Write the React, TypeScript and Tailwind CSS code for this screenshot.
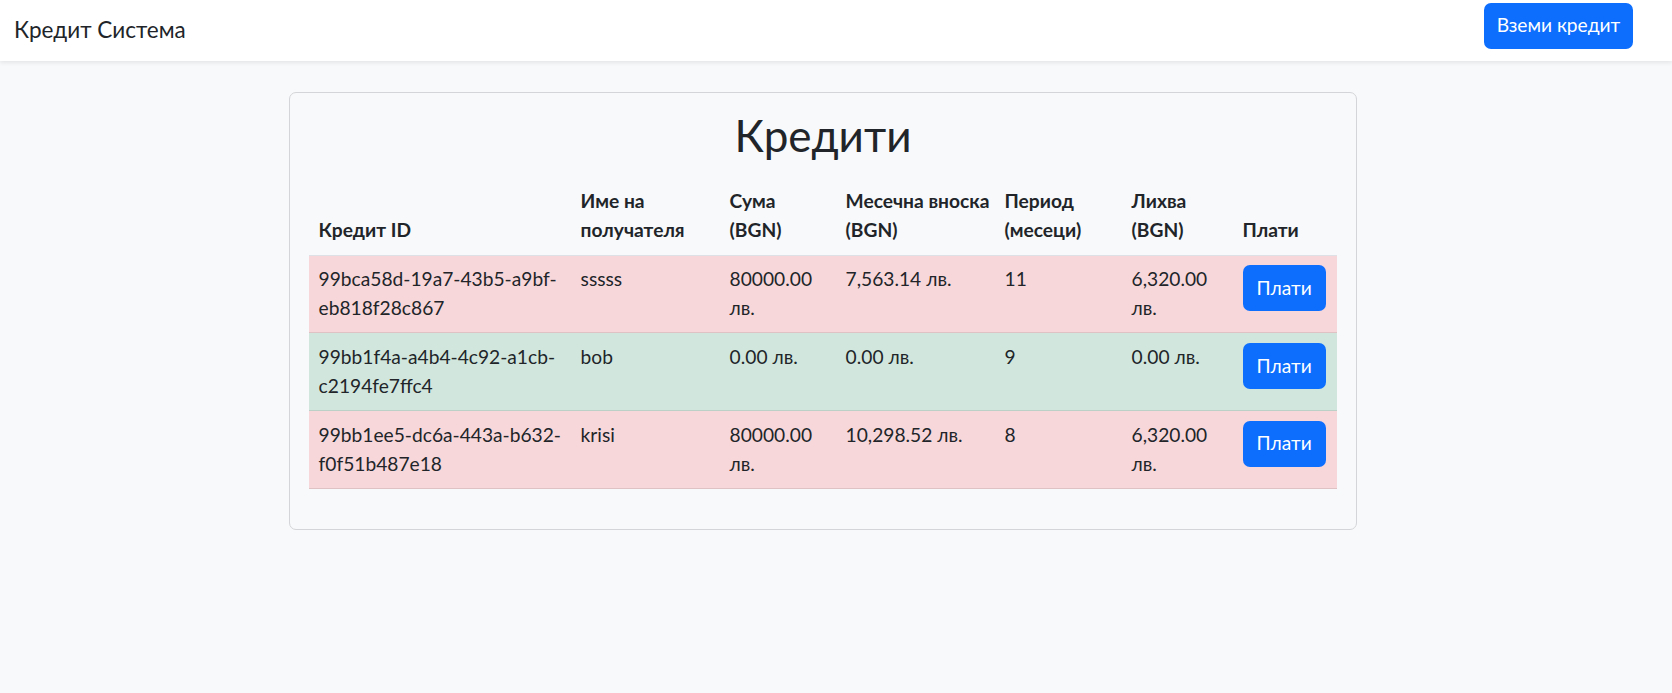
import React from 'react';

type Credit = {
  id: string;
  name: string;
  amount: string;
  monthly: string;
  period: string;
  interest: string;
  paid: boolean;
};

const credits: Credit[] = [
  { id: '99bca58d-19a7-43b5-a9bf-eb818f28c867', name: 'sssss', amount: '80000.00 лв.', monthly: '7,563.14 лв.', period: '11', interest: '6,320.00 лв.', paid: false },
  { id: '99bb1f4a-a4b4-4c92-a1cb-c2194fe7ffc4', name: 'bob', amount: '0.00 лв.', monthly: '0.00 лв.', period: '9', interest: '0.00 лв.', paid: true },
  { id: '99bb1ee5-dc6a-443a-b632-f0f51b487e18', name: 'krisi', amount: '80000.00 лв.', monthly: '10,298.52 лв.', period: '8', interest: '6,320.00 лв.', paid: false },
];

// header lines, broken where the original wraps
const headers: string[][] = [
  ['Кредит ID'],
  ['Име на', 'получателя'],
  ['Сума', '(BGN)'],
  ['Месечна вноска', '(BGN)'],
  ['Период', '(месеци)'],
  ['Лихва', '(BGN)'],
  ['Плати'],
];

const App: React.FC = () => {
  return (
    <div className="min-h-[693px] bg-[#f8f9fa] text-[#212529] font-['Lato','Noto_Sans',sans-serif] text-[19.2px] leading-[1.5]">
      {/* Navbar */}
      <nav className="h-[61px] bg-white shadow-[0_2px_4px_rgba(0,0,0,0.08)] flex items-center justify-between pl-[14px] pr-[39px]">
        <span className="text-[22.5px] leading-none">Кредит Система</span>
        <button className="bg-[#0d6efd] text-white rounded-[7px] h-[46px] w-[149px] mt-[-10px] text-[19.2px]">
          Вземи кредит
        </button>
      </nav>

      {/* Credits card */}
      <div className="ml-[289px] mt-[31px] w-[1068px] border border-[#d3d5d8] rounded-[7px] bg-[#f8f9fa] px-[19px] pt-[16px] pb-[40px]">
        <h1 className="text-center text-[44px] leading-[1.2] font-normal mb-[16px]">Кредити</h1>

        <table className="w-full table-fixed border-collapse">
          <colgroup>
            <col className="w-[262px]" />
            <col className="w-[149px]" />
            <col className="w-[116px]" />
            <col className="w-[159px]" />
            <col className="w-[127px]" />
            <col className="w-[111px]" />
            <col className="w-[104px]" />
          </colgroup>
          <thead>
            <tr className="border-b border-[#dee2e6]">
              {headers.map((lines) => (
                <th key={lines.join(' ')} className="text-left align-bottom font-bold px-[9.6px] py-[9.6px]">
                  {lines.map((l, i) => (
                    <div key={i} className="whitespace-nowrap">{l}</div>
                  ))}
                </th>
              ))}
            </tr>
          </thead>
          <tbody>
            {credits.map((c) => (
              <tr
                key={c.id}
                className={c.paid ? 'bg-[#d1e7dd] border-b border-[#bcd0c7]' : 'bg-[#f8d7da] border-b border-[#dfc2c4]'}
              >
                <td className="align-top px-[9.6px] py-[9.6px]">
                  <div className="whitespace-nowrap">{c.id.slice(0, 24)}</div>
                  <div className="whitespace-nowrap">{c.id.slice(24)}</div>
                </td>
                <td className="align-top px-[9.6px] py-[9.6px]">{c.name}</td>
                <td className="align-top px-[9.6px] py-[9.6px]">{c.amount}</td>
                <td className="align-top px-[9.6px] py-[9.6px] whitespace-nowrap">{c.monthly}</td>
                <td className="align-top px-[9.6px] py-[9.6px]">{c.period}</td>
                <td className="align-top px-[9.6px] py-[9.6px]">{c.interest}</td>
                <td className="align-top px-[9.6px] py-[9.6px]">
                  <button className="bg-[#0d6efd] text-white rounded-[7px] h-[46px] w-[83px] text-[19.2px]">
                    Плати
                  </button>
                </td>
              </tr>
            ))}
          </tbody>
        </table>
      </div>
    </div>
  );
};

export default App;
